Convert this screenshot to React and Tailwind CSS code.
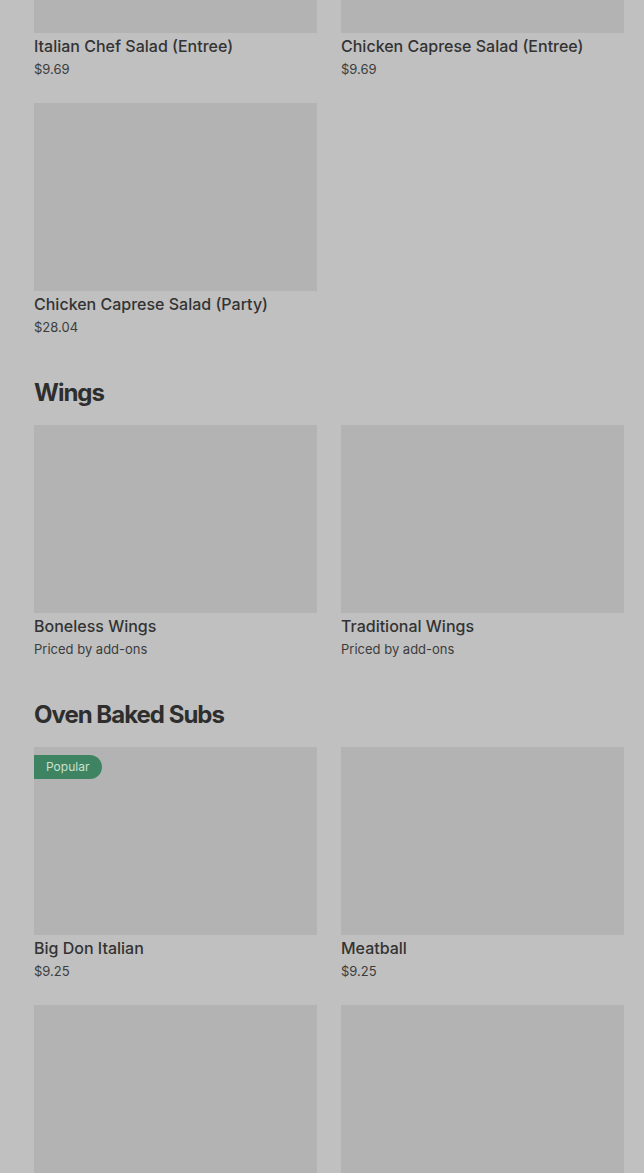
import React from "react";

const sections = [
  {
    title: null,
    items: [
      { name: "Italian Chef Salad (Entree)", price: "$9.69" },
      { name: "Chicken Caprese Salad (Entree)", price: "$9.69" },
      { name: "Chicken Caprese Salad (Party)", price: "$28.04" },
    ],
  },
  {
    title: "Wings",
    items: [
      { name: "Boneless Wings", price: "Priced by add-ons" },
      { name: "Traditional Wings", price: "Priced by add-ons" },
    ],
  },
  {
    title: "Oven Baked Subs",
    items: [
      { name: "Big Don Italian", price: "$9.25", popular: true },
      { name: "Meatball", price: "$9.25" },
      { name: "", price: "" },
      { name: "", price: "" },
    ],
  },
];

function Card({ item }) {
  return (
    <div className="flex flex-col">
      <div className="relative h-[188px] bg-[#b3b3b3]">
        {item.popular && (
          <span className="absolute left-0 top-2 flex h-6 items-center rounded-r-full bg-[#3f8462] pl-3 pr-[13px] text-[12px] text-[#c9e0d2]">
            Popular
          </span>
        )}
      </div>
      <div className="mt-[3px] h-5 text-[16px] leading-5 font-medium text-[#333333]">{item.name}</div>
      <div className="mt-[3px] h-5 text-[13px] leading-5 text-[#3c3c3c]">{item.price}</div>
    </div>
  );
}

export default function App() {
  return (
    <div
      className="min-h-screen overflow-hidden bg-[#c0c0c0] pl-[34px] pr-5"
      style={{ fontFamily: "Inter, 'Noto Sans', sans-serif" }}
    >
      <div className="-mt-[155px] flex flex-col">
        {sections.map((s, i) => (
          <section key={i} className="flex flex-col">
            {s.title && (
              <h2 className="mt-[40px] mb-[16px] h-8 text-[24px] leading-8 font-bold tracking-[-1px] text-[#2e2e2e]">
                {s.title}
              </h2>
            )}
            <div className="grid grid-cols-2 gap-x-6 gap-y-6">
              {s.items.map((it, j) => (
                <Card key={j} item={it} />
              ))}
            </div>
          </section>
        ))}
      </div>
    </div>
  );
}
